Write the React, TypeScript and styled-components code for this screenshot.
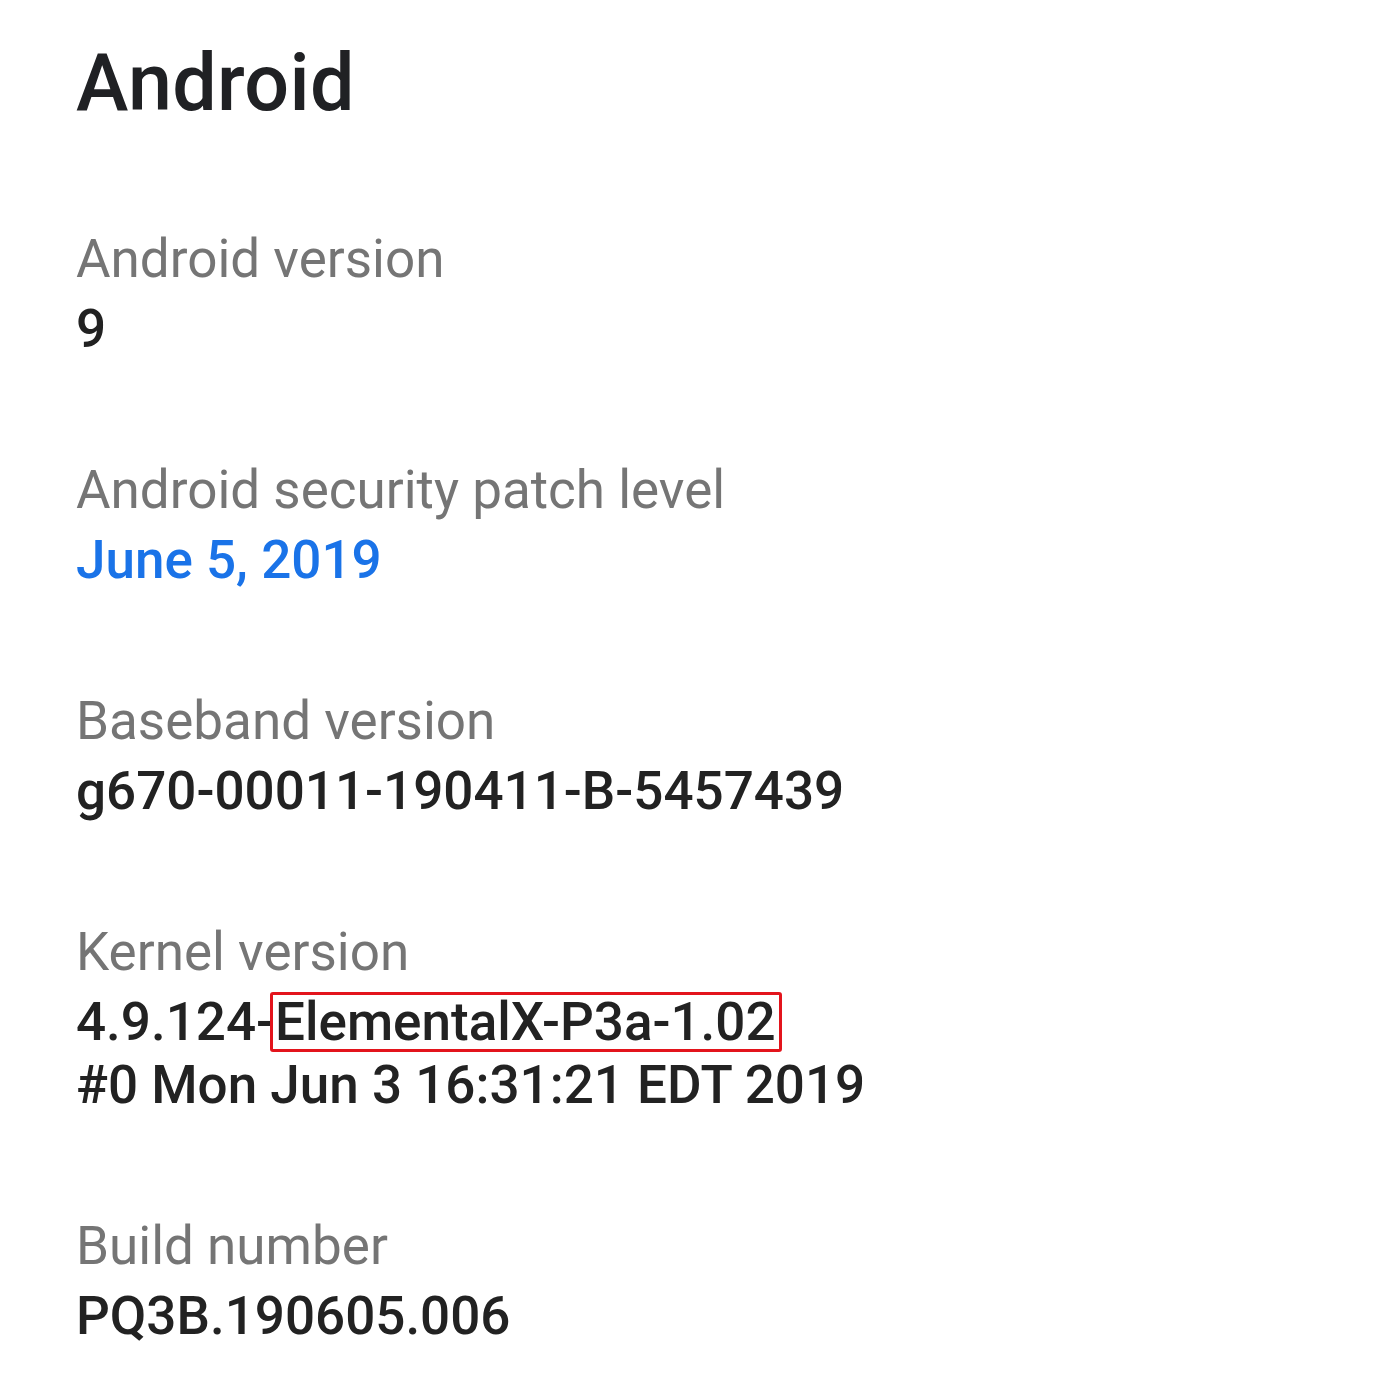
import React from "react";
import styled, { createGlobalStyle } from "styled-components";

const Global = createGlobalStyle`
  html, body { margin: 0; padding: 0; background: #ffffff; }
  body { font-family: Roboto, "Noto Sans", "Liberation Sans", sans-serif; }
`;

const Page = styled.main`
  box-sizing: border-box;
  width: 1386px;
  min-height: 1388px;
  padding: 37px 0 0 76px;
  background: #ffffff;
  display: flex;
  flex-direction: column;
`;

const Title = styled.h1`
  margin: 0 0 91px 0;
  font-family: Roboto, "Noto Sans", sans-serif;
  font-size: 79px;
  line-height: 92px;
  font-weight: 500;
  color: #202124;
  letter-spacing: 0.3px;
`;

const List = styled.div`
  display: flex;
  flex-direction: column;
  gap: 90px;
`;

const Item = styled.section`
  display: flex;
  flex-direction: column;
`;

const Label = styled.div`
  font-size: 53px;
  line-height: 77px;
  color: #757575;
  font-weight: 400;
  padding-top: 1px;
`;

const Value = styled.div<{ $accent?: boolean }>`
  font-size: 53px;
  line-height: 63px;
  font-weight: 500;
  color: ${(p) => (p.$accent ? "#1a73e8" : "#222222")};
`;

const Highlight = styled.span`
  display: inline-block;
  border: 3px solid #e3141c;
  border-radius: 3px;
  line-height: 54px;
  padding: 0 3px 0 2px;
  margin: 0 -5px 0 -4px;
`;

export default function App() {
  return (
    <Page>
      <Global />
      <Title>Android</Title>
      <List>
        <Item>
          <Label>Android version</Label>
          <Value>9</Value>
        </Item>
        <Item>
          <Label>Android security patch level</Label>
          <Value $accent>June 5, 2019</Value>
        </Item>
        <Item>
          <Label>Baseband version</Label>
          <Value>g670-00011-190411-B-5457439</Value>
        </Item>
        <Item>
          <Label>Kernel version</Label>
          <Value>
            4.9.124-<Highlight>ElementalX-P3a-1.02</Highlight>
          </Value>
          <Value>#0 Mon Jun 3 16:31:21 EDT 2019</Value>
        </Item>
        <Item>
          <Label>Build number</Label>
          <Value>PQ3B.190605.006</Value>
        </Item>
      </List>
    </Page>
  );
}
